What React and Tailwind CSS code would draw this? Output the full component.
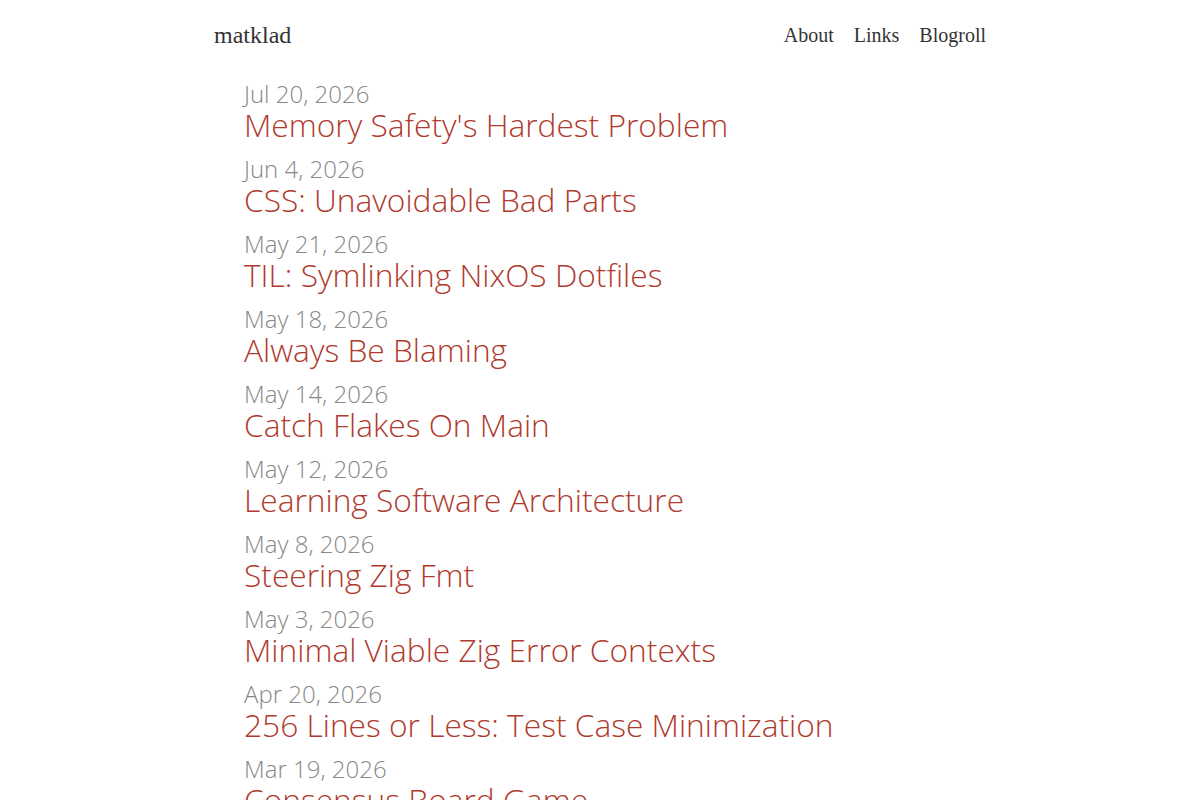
import React from "react";

const posts = [
  { date: "Jul 20, 2026", title: "Memory Safety's Hardest Problem" },
  { date: "Jun 4, 2026", title: "CSS: Unavoidable Bad Parts" },
  { date: "May 21, 2026", title: "TIL: Symlinking NixOS Dotfiles" },
  { date: "May 18, 2026", title: "Always Be Blaming" },
  { date: "May 14, 2026", title: "Catch Flakes On Main" },
  { date: "May 12, 2026", title: "Learning Software Architecture" },
  { date: "May 8, 2026", title: "Steering Zig Fmt" },
  { date: "May 3, 2026", title: "Minimal Viable Zig Error Contexts" },
  { date: "Apr 20, 2026", title: "256 Lines or Less: Test Case Minimization" },
  { date: "Mar 19, 2026", title: "Consensus Board Game" },
  { date: "Mar 2, 2026", title: "Against Query Based Compilers" },
];

const App = () => {
  return (
    <div className="min-h-screen bg-white">
      <div className="mx-auto w-[772px]">
        <header className="h-[70px] flex items-center justify-between font-['Liberation_Serif',serif] text-[#333]">
          <a href="#" className="text-[24px]">matklad</a>
          <nav className="flex gap-5 text-[20px]">
            <a href="#">About</a>
            <a href="#">Links</a>
            <a href="#">Blogroll</a>
          </nav>
        </header>

        <ul className="pl-[30px] pt-[10px] font-['Open_Sans',sans-serif] font-light">
          {posts.map((p) => (
            <li key={p.title} className="mb-[13px]">
              <time className="block text-[24px] leading-[28px] text-[#888]">{p.date}</time>
              <a href="#" className="block text-[31.7px] leading-[34px] text-[#b03a2e]">{p.title}</a>
            </li>
          ))}
        </ul>
      </div>
    </div>
  );
};

export default App;
